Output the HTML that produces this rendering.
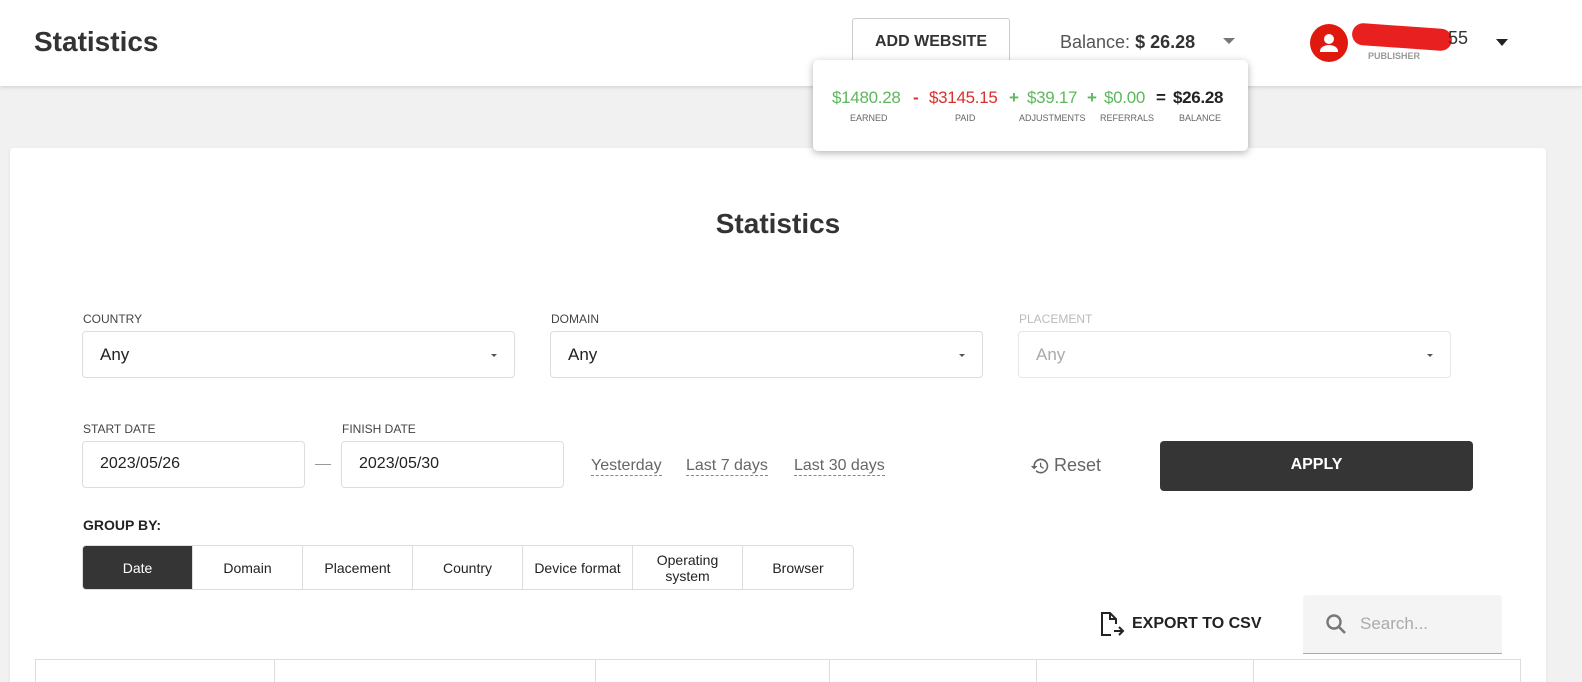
<!DOCTYPE html>
<html><head><meta charset="utf-8"><style>
*{box-sizing:border-box;margin:0;padding:0}
html,body{width:1582px;height:682px;overflow:hidden}
body{background:#f1f1f1;font-family:"Liberation Sans",Arial,sans-serif;color:#333;position:relative}
.hdr{position:absolute;left:0;top:0;width:1582px;height:86px;background:#fff;box-shadow:0 1px 4px rgba(0,0,0,.15)}
.abs{position:absolute}
.card{position:absolute;left:10px;top:148px;width:1536px;height:560px;background:#fff;border-radius:4px;box-shadow:0 1px 3px rgba(0,0,0,.08)}
.lbl{position:absolute;font-size:12px;color:#444}
.sel{position:absolute;height:47px;border:1px solid #ddd;border-radius:4px;font-size:17px;padding:13px 0 0 17px;color:#222}
.sel.dd:after{content:"";position:absolute;right:17px;top:22px;border:3px solid transparent;border-top:3px solid #555}
.q{position:absolute;top:457px;font-size:16px;color:#666;border-bottom:1px dashed #888;line-height:18px}
.grp{position:absolute;left:82px;top:545px;height:45px;display:flex;border:1px solid #ddd;border-radius:4px;overflow:hidden}
.grp div{width:110px;border-right:1px solid #ddd;display:flex;align-items:center;justify-content:center;text-align:center;font-size:14px;color:#222;line-height:16px}
.grp div:last-child{border-right:none}
.pop{position:absolute;left:813px;top:60px;width:435px;height:91px;background:#fff;border-radius:5px;box-shadow:0 2px 8px rgba(0,0,0,.3)}
.pop .v{position:absolute;top:28px;font-size:17px;letter-spacing:-.3px}
.pop .s{position:absolute;top:53px;font-size:9px;color:#666;text-align:center}
</style></head><body>
<div class="hdr"></div>
<div class="abs" style="left:34px;top:26px;font-size:28px;font-weight:bold;color:#333">Statistics</div>
<div class="abs" style="left:852px;top:18px;width:158px;height:48px;border:1px solid #ccc;border-radius:3px;font-size:16px;font-weight:bold;text-align:center;line-height:46px;color:#333">ADD WEBSITE</div>
<div class="abs" style="left:1060px;top:32px;font-size:18px;color:#555">Balance: <b style="color:#333">$ 26.28</b></div>
<div class="abs" style="left:1223px;top:38px;border:6px solid transparent;border-top:6px solid #777"></div>
<div class="abs" style="left:1310px;top:24px;width:38px;height:38px;border-radius:50%;background:#e0190f">
<svg width="38" height="38" viewBox="0 0 38 38"><circle cx="19" cy="15" r="5" fill="#fff"/><path d="M10 27c0-4 5-6 9-6s9 2 9 6v1H10z" fill="#fff"/></svg></div>
<div class="abs" style="left:1352px;top:26px;width:100px;height:22px;background:#e82020;border-radius:11px;transform:rotate(4deg)"></div>
<div class="abs" style="left:1448px;top:28px;font-size:18px;color:#333">55</div>
<div class="abs" style="left:1368px;top:51px;font-size:9px;font-weight:bold;color:#999">PUBLISHER</div>
<div class="abs" style="left:1496px;top:39px;border:6px solid transparent;border-top:7px solid #222"></div>

<div class="card"></div>
<div class="pop">
<span class="v" style="left:19px;color:#5cb85c">$1480.28</span>
<span class="v" style="left:100px;color:#d9302c;font-weight:bold">-</span>
<span class="v" style="left:116px;color:#d9302c">$3145.15</span>
<span class="v" style="left:196px;color:#5cb85c;font-weight:bold">+</span>
<span class="v" style="left:214px;color:#5cb85c">$39.17</span>
<span class="v" style="left:274px;color:#5cb85c;font-weight:bold">+</span>
<span class="v" style="left:291px;color:#5cb85c">$0.00</span>
<span class="v" style="left:343px;color:#222;font-weight:bold">=</span>
<span class="v" style="left:360px;color:#222;font-weight:bold">$26.28</span>
<span class="s" style="left:37px">EARNED</span>
<span class="s" style="left:142px">PAID</span>
<span class="s" style="left:206px">ADJUSTMENTS</span>
<span class="s" style="left:287px">REFERRALS</span>
<span class="s" style="left:366px">BALANCE</span>
</div>

<div class="abs" style="left:0;width:1556px;top:208px;text-align:center;font-size:28px;font-weight:bold;color:#333">Statistics</div>

<div class="lbl" style="left:83px;top:312px">COUNTRY</div>
<div class="sel dd" style="left:82px;top:331px;width:433px">Any</div>
<div class="lbl" style="left:551px;top:312px">DOMAIN</div>
<div class="sel dd" style="left:550px;top:331px;width:433px">Any</div>
<div class="lbl" style="left:1019px;top:312px;color:#bbb">PLACEMENT</div>
<div class="sel dd" style="left:1018px;top:331px;width:433px;color:#aaa;border-color:#e6e6e6">Any</div>

<div class="lbl" style="left:83px;top:422px">START DATE</div>
<div class="sel" style="left:82px;top:441px;width:223px;font-size:16px">2023/05/26</div>
<div class="abs" style="left:315px;top:464px;width:16px;height:1px;background:#999"></div>
<div class="lbl" style="left:342px;top:422px">FINISH DATE</div>
<div class="sel" style="left:341px;top:441px;width:223px;font-size:16px">2023/05/30</div>
<span class="q" style="left:591px">Yesterday</span>
<span class="q" style="left:686px">Last 7 days</span>
<span class="q" style="left:794px">Last 30 days</span>
<svg class="abs" style="left:1030px;top:456px" width="20" height="20" viewBox="0 0 24 24"><path d="M13 3a9 9 0 0 0-9 9H1l4 4 4-4H6a7 7 0 1 1 2 5l-1.4 1.4A9 9 0 1 0 13 3zm-1 5v5l4 2.5.8-1.3-3.3-2V8z" fill="#666"/></svg>
<div class="abs" style="left:1054px;top:455px;font-size:18px;color:#666">Reset</div>
<div class="abs" style="left:1160px;top:441px;width:313px;height:50px;background:#353535;border-radius:4px;color:#fff;font-weight:bold;font-size:16px;text-align:center;line-height:48px">APPLY</div>

<div class="abs" style="left:83px;top:517px;font-size:14px;font-weight:bold;color:#222">GROUP BY:</div>
<div class="grp">
<div style="background:#353535;color:#fff">Date</div><div>Domain</div><div>Placement</div><div>Country</div><div>Device format</div><div>Operating<br>system</div><div>Browser</div>
</div>

<svg class="abs" style="left:1099px;top:611px" width="26" height="26" viewBox="0 0 26 26"><path d="M12 24H3V2h8l6 6v5M11 2v6h6M15 20h9M20 16l4 4-4 4" fill="none" stroke="#222" stroke-width="2"/></svg>
<div class="abs" style="left:1132px;top:615px;font-size:16px;font-weight:bold;color:#222">EXPORT TO CSV</div>
<div class="abs" style="left:1303px;top:595px;width:199px;height:59px;background:#f4f4f4;border-bottom:1px solid #aaa;border-radius:4px 4px 0 0"></div>
<svg class="abs" style="left:1324px;top:612px" width="24" height="24" viewBox="0 0 24 24"><circle cx="10" cy="10" r="6.5" fill="none" stroke="#777" stroke-width="2.4"/><path d="M15 15l6 6" stroke="#777" stroke-width="2.6"/></svg>
<div class="abs" style="left:1360px;top:614px;font-size:17px;color:#aaa">Search...</div>

<div class="abs" style="left:35px;top:659px;width:1486px;height:30px;border:1px solid #ddd"></div>
<div class="abs" style="left:274px;top:659px;width:1px;height:30px;background:#ddd"></div>
<div class="abs" style="left:595px;top:659px;width:1px;height:30px;background:#ddd"></div>
<div class="abs" style="left:829px;top:659px;width:1px;height:30px;background:#ddd"></div>
<div class="abs" style="left:1036px;top:659px;width:1px;height:30px;background:#ddd"></div>
<div class="abs" style="left:1253px;top:659px;width:1px;height:30px;background:#ddd"></div>
</body></html>
